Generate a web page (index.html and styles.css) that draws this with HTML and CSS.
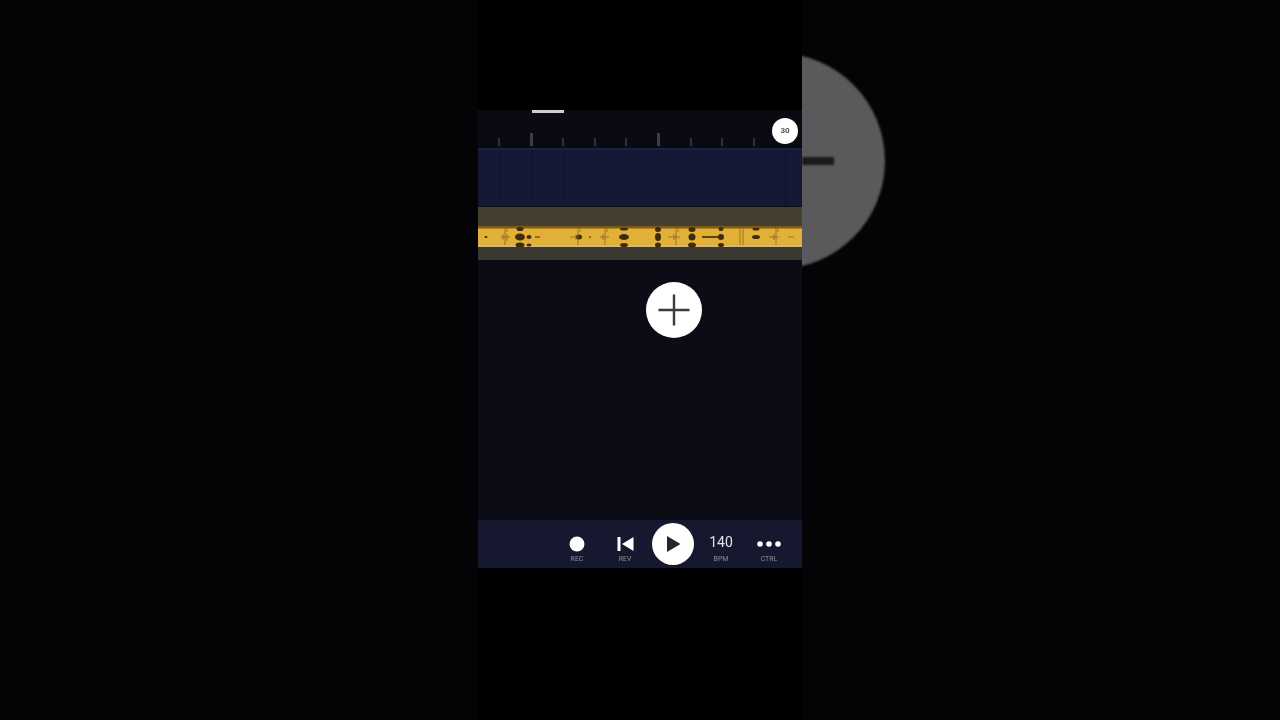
FILE: index.html
```html
<!DOCTYPE html>
<html lang="en">
<head>
    <meta charset="UTF-8">
    <title>Beat Maker - Timeline</title>
    <link rel="stylesheet" href="styles.css">
</head>
<body>
    <div class="backdrop"></div>

    <main class="phone-column">
        <div class="letterbox-top"></div>

        <div class="app">
            <!-- Ruler -->
            <header class="ruler">
                <div class="scrub-handle"></div>
                <div class="ticks">
                    <span class="tick"></span>
                    <span class="tick major"></span>
                    <span class="tick"></span>
                    <span class="tick"></span>
                    <span class="tick"></span>
                    <span class="tick major"></span>
                    <span class="tick"></span>
                    <span class="tick"></span>
                    <span class="tick"></span>
                </div>
                <div class="zoom-badge">30</div>
            </header>

            <!-- Tracks -->
            <section class="track-blue">
                <span class="grid-line"></span><span class="grid-line"></span><span class="grid-line"></span>
                <span class="grid-line"></span><span class="grid-line"></span><span class="grid-line"></span>
                <span class="grid-line"></span><span class="grid-line"></span><span class="grid-line"></span>
                <span class="grid-line dark"></span>
            </section>

            <section class="track-audio">
                <div class="clip-pad top"></div>
                <svg class="waveform" viewBox="0 0 324 21" preserveAspectRatio="none">
                    <rect width="324" height="21" fill="#e2b036"/>
                    <rect width="324" height="2.500" fill="#7d5a16"/>
                    <rect y="19.500" width="324" height="1.500" fill="#cdbb8e"/>
                    <g class="wave-marks" fill="#3f2a0c">
                        <ellipse cx="8" cy="11" rx="1.500" ry="1"/>
                        <ellipse cx="42" cy="11" rx="5" ry="3.500"/>
                        <ellipse cx="51" cy="11" rx="2.500" ry="2"/>
                        <rect x="57" y="10.500" width="5" height="1"/>
                        <ellipse cx="101" cy="11" rx="3" ry="2.500"/>
                        <ellipse cx="112" cy="11" rx="1" ry="0.700"/>
                        <ellipse cx="146" cy="11" rx="5" ry="3"/>
                        <ellipse cx="180" cy="11" rx="3" ry="4"/>
                        <ellipse cx="214" cy="11" rx="3.500" ry="3.500"/>
                        <rect x="224" y="10.200" width="18" height="1.600"/>
                        <ellipse cx="243" cy="11" rx="3" ry="3"/>
                        <ellipse cx="278" cy="11" rx="4" ry="2"/>
                        <rect x="310" y="10.600" width="6" height="0.800" opacity="0.500"/>

                        <!-- thin transients -->
                        <g stroke="#8a6820" stroke-width="0.800" fill="none">
                            <path d="M23 11h9M27 2v17M29 2v4M29 8v7M25 8v6"/>
                            <path d="M92 11h6M100 2v17M102 2v4M98 8v6"/>
                            <path d="M122 11h9M127 2v17M129 2v4M125 8v6"/>
                            <path d="M190 11h12M198 2v17M200 2v4M196 8v6"/>
                            <path d="M262 2v17M265 2v17"/>
                            <path d="M291 11h10M298 2v17M300 2v4M296 8v6"/>
                        </g>

                        <!-- top edge bumps -->
                        <ellipse cx="42" cy="3" rx="3.500" ry="2"/>
                        <ellipse cx="146" cy="3" rx="4" ry="1.500"/>
                        <ellipse cx="180" cy="3.500" rx="3" ry="2.500"/>
                        <ellipse cx="214" cy="3.500" rx="3.500" ry="2.500"/>
                        <ellipse cx="243" cy="3" rx="2.500" ry="2"/>
                        <ellipse cx="278" cy="3" rx="3.500" ry="1.500"/>

                        <!-- bottom edge bumps -->
                        <ellipse cx="42" cy="19" rx="4.500" ry="2.500"/>
                        <ellipse cx="51" cy="19" rx="2.500" ry="1.500"/>
                        <ellipse cx="146" cy="19" rx="4" ry="2"/>
                        <ellipse cx="180" cy="19" rx="3" ry="2.500"/>
                        <ellipse cx="214" cy="19" rx="4" ry="2.500"/>
                        <ellipse cx="243" cy="19" rx="3" ry="2"/>
                    </g>
                </svg>
                <div class="clip-pad bottom"></div>
            </section>

            <!-- Empty canvas -->
            <section class="canvas">
                <button class="add-btn">
                    <svg viewBox="0 0 56 56" width="56" height="56">
                        <path d="M28 12.500v31M12.500 28h31" stroke="#3a3a42" stroke-width="2.400" fill="none"/>
                    </svg>
                </button>
            </section>

            <!-- Transport -->
            <footer class="transport">
                <div class="control">
                    <svg class="control-icon" viewBox="0 0 20 20"><circle cx="10" cy="10" r="7.500" fill="#fff"/></svg>
                    <span class="control-label">REC</span>
                </div>
                <div class="control">
                    <svg class="control-icon" viewBox="0 0 20 20"><path d="M2.500 3h3v14h-3zM18.500 3v14L7 10z" fill="#fff"/></svg>
                    <span class="control-label">REV</span>
                </div>
                <div class="control">
                    <button class="play-btn">
                        <svg viewBox="0 0 42 42" width="42" height="42"><path d="M15 13l13.500 8-13.500 8z" fill="#26262c"/></svg>
                    </button>
                </div>
                <div class="control">
                    <span class="bpm-value">140</span>
                    <span class="control-label">BPM</span>
                </div>
                <div class="control">
                    <svg class="control-icon wide" viewBox="0 0 26 20"><circle cx="4" cy="10" r="2.800" fill="#fff"/><circle cx="13" cy="10" r="2.800" fill="#fff"/><circle cx="22" cy="10" r="2.800" fill="#fff"/></svg>
                    <span class="control-label">CTRL</span>
                </div>
            </footer>
        </div>
    </main>

    <div class="backdrop backdrop-right">
        <div class="ghost-circle"><span class="ghost-minus"></span></div>
    </div>
</body>
</html>
```

FILE: styles.css
```css
/* ----- Color Variables ----- */
:root {
    --ruler-bg: #0a0a12;
    --canvas-bg: #0c0c17;
    --track-blue: #151935;
    --transport-bg: #15182f;
    --clip-brown: #453f2f;
    --label-color: #8f8f9a;
}

/* ----- Global Reset ----- */
* {
    margin: 0;
    padding: 0;
    box-sizing: border-box;
    font-family: Roboto, 'Liberation Sans', sans-serif;
}

/* ----- Page Layout ----- */
body {
    width: 1280px;
    height: 720px;
    display: flex;
    background: #000;
    overflow: hidden;
}

.backdrop {
    position: relative;
    flex: 1;
    background: #040406;
    overflow: hidden;
}

.ghost-circle {
    position: absolute;
    left: -133px;
    top: 53px;
    width: 216px;
    height: 216px;
    border-radius: 50%;
    background: #5a5a5c;
    filter: blur(1px);
}

.ghost-minus {
    position: absolute;
    left: 133px;
    top: 104px;
    width: 32px;
    height: 8px;
    background: #1a1a1d;
}

.phone-column {
    width: 324px;
    background: #000;
    display: flex;
    flex-direction: column;
}

.letterbox-top {
    height: 110px;
}

.app {
    height: 458px;
    display: flex;
    flex-direction: column;
    background: var(--canvas-bg);
    filter: blur(0.5px);
}

/* ----- Ruler ----- */
.ruler {
    position: relative;
    height: 40px;
    background: var(--ruler-bg);
    border-bottom: 2px solid #1c2140;
    display: flex;
    align-items: flex-end;
    padding: 0 0 2px 20px;
}

.scrub-handle {
    position: absolute;
    left: 54px;
    top: 0;
    width: 32px;
    height: 3px;
    background: #cfcfd4;
}

.ticks {
    display: flex;
    align-items: flex-end;
    gap: 29.6px;
}

.tick {
    width: 2px;
    height: 8px;
    background: #303038;
}

.tick.major {
    width: 3px;
    height: 13px;
    background: #3c3c44;
}

.zoom-badge {
    position: absolute;
    left: 294px;
    top: 8px;
    width: 26px;
    height: 26px;
    border-radius: 50%;
    background: #fff;
    color: #555;
    font-size: 8px;
    font-weight: 700;
    line-height: 26px;
    text-align: center;
}

/* ----- Tracks ----- */
.track-blue {
    height: 56px;
    margin-bottom: 1px;
    background: var(--track-blue);
    display: flex;
    justify-content: space-between;
    padding: 0 16px 0 21px;
}

.grid-line {
    width: 1px;
    background: #12152d;
}

.grid-line.dark {
    background: #0e1024;
}

.track-audio {
    height: 53px;
    display: flex;
    flex-direction: column;
}

.clip-pad {
    background: var(--clip-brown);
}

.clip-pad.top {
    height: 19px;
}

.clip-pad.bottom {
    height: 13px;
    background: #3b3831;
}

.waveform {
    display: block;
    width: 324px;
    height: 21px;
}

.wave-marks {
    filter: blur(0.4px);
}

/* ----- Empty Canvas ----- */
.canvas {
    flex: 1;
    padding: 22px 0 0 168px;
}

.add-btn {
    display: block;
    width: 56px;
    height: 56px;
    border: none;
    border-radius: 50%;
    background: #fff;
}

.add-btn svg {
    display: block;
}

/* ----- Transport ----- */
.transport {
    height: 48px;
    background: var(--transport-bg);
    display: flex;
    padding-left: 75px;
}

.control {
    width: 48px;
    display: flex;
    flex-direction: column;
    align-items: center;
    justify-content: center;
}

.control-icon {
    display: block;
    width: 20px;
    height: 20px;
    margin-top: 8px;
}

.control-icon.wide {
    width: 26px;
}

.control-label {
    margin-top: 1px;
    font-size: 7px;
    line-height: 8px;
    color: var(--label-color);
}

.bpm-value {
    margin-top: 6px;
    margin-bottom: 2px;
    font-size: 14px;
    line-height: 20px;
    color: #e4e4e8;
}

.play-btn {
    display: block;
    width: 42px;
    height: 42px;
    border: none;
    border-radius: 50%;
    background: #fff;
}

.play-btn svg {
    display: block;
}
```
